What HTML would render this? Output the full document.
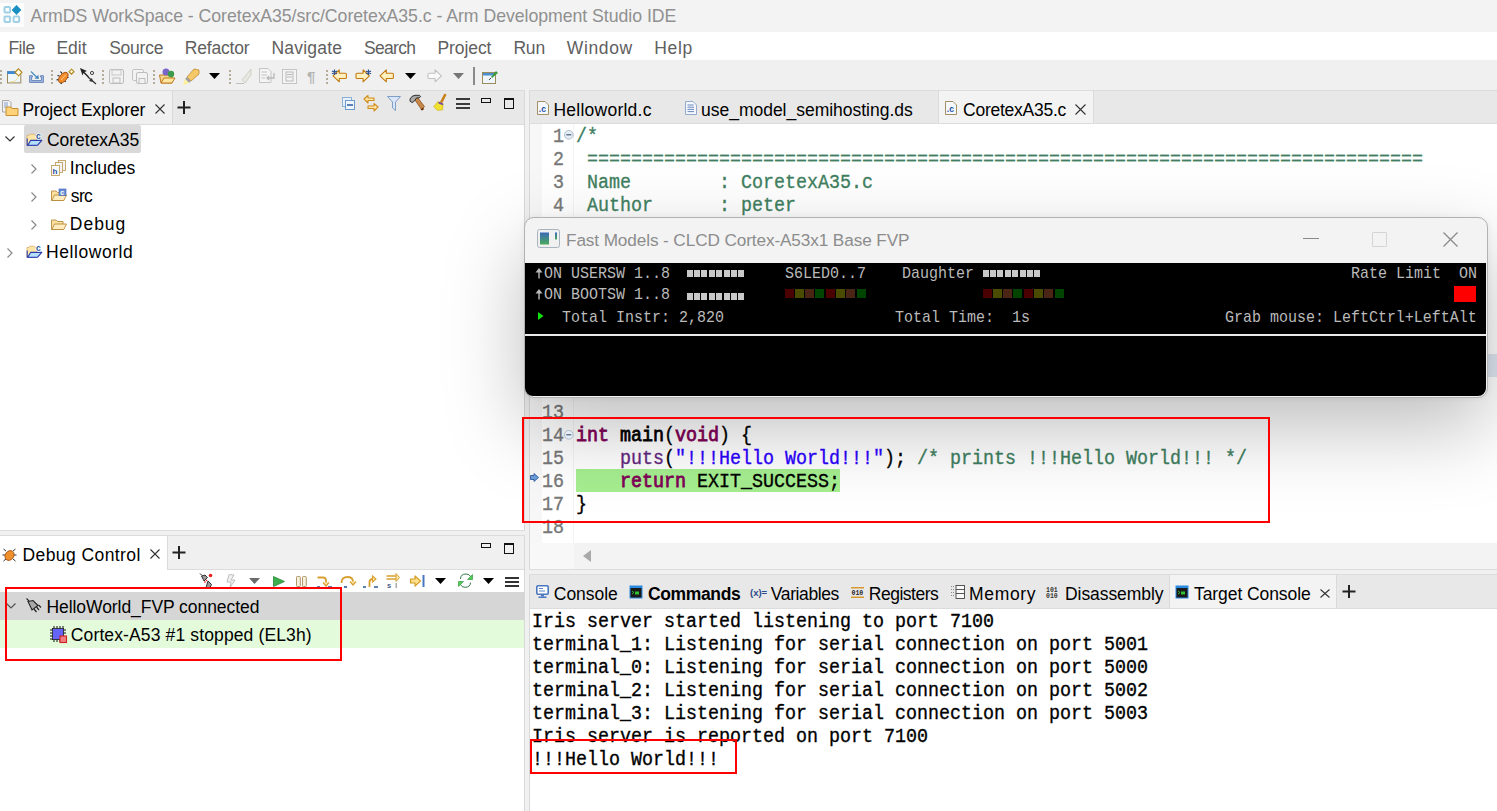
<!DOCTYPE html>
<html><head><meta charset="utf-8">
<style>
*{margin:0;padding:0;box-sizing:border-box}
html,body{width:1497px;height:811px;overflow:hidden;background:#f0f0f0;font-family:"Liberation Sans",sans-serif;font-size:17.5px;color:#000;position:relative}
.a{position:absolute;white-space:pre}
.m{font-family:"Liberation Mono",monospace;-webkit-text-stroke:0.35px currentColor}
.m b{font-weight:normal;-webkit-text-stroke:0.8px currentColor}
svg{position:absolute;overflow:visible}
</style></head><body>
<div class="a" style="left:0px;top:0px;width:1497px;height:32px;background:#f3f3f3;"></div>
<div class="a" style="left:0px;top:3px;width:24px;height:24px;background:#fdfdfd;"></div>
<svg style="left:0px;top:3px" width="24" height="24" viewBox="0 0 24 24"><g fill="none" stroke="#9fd0e6" stroke-width="2"><rect x="4.5" y="4" width="5.6" height="5.6" rx="1"/><rect x="4.5" y="13.5" width="5.6" height="5.6" rx="1"/><rect x="13.6" y="13.5" width="5.6" height="5.6" rx="1"/></g><path d="M16.5 2.3 L21 7 L16.5 11.6 L12 7Z" fill="#1a8fc2" stroke="#2a98c8" stroke-width="0.8" stroke-linejoin="round"/></svg>
<div class="a" style="left:30.5px;top:6.07px;font-size:17.7px;line-height:20px;color:#909090;letter-spacing:-0.036px;">ArmDS WorkSpace - CoretexA35/src/CoretexA35.c - Arm Development Studio IDE</div>
<div class="a" style="left:0px;top:32px;width:1497px;height:28px;background:#ffffff;"></div>
<div class="a" style="left:8.4px;top:37.94px;font-size:17.5px;line-height:20px;color:#606060;letter-spacing:-0.489px;">File</div>
<div class="a" style="left:56.4px;top:37.94px;font-size:17.5px;line-height:20px;color:#606060;letter-spacing:0.036px;">Edit</div>
<div class="a" style="left:109.2px;top:37.94px;font-size:17.5px;line-height:20px;color:#606060;letter-spacing:-0.243px;">Source</div>
<div class="a" style="left:184.7px;top:37.94px;font-size:17.5px;line-height:20px;color:#606060;letter-spacing:-0.173px;">Refactor</div>
<div class="a" style="left:271.5px;top:37.94px;font-size:17.5px;line-height:20px;color:#606060;letter-spacing:0.209px;">Navigate</div>
<div class="a" style="left:364px;top:37.94px;font-size:17.5px;line-height:20px;color:#606060;letter-spacing:-0.703px;">Search</div>
<div class="a" style="left:437.5px;top:37.94px;font-size:17.5px;line-height:20px;color:#606060;letter-spacing:-0.084px;">Project</div>
<div class="a" style="left:513.4px;top:37.94px;font-size:17.5px;line-height:20px;color:#606060;letter-spacing:-0.185px;">Run</div>
<div class="a" style="left:566.8px;top:37.94px;font-size:17.5px;line-height:20px;color:#606060;letter-spacing:0.639px;">Window</div>
<div class="a" style="left:654.3px;top:37.94px;font-size:17.5px;line-height:20px;color:#606060;letter-spacing:0.614px;">Help</div>
<div class="a" style="left:0px;top:60px;width:1497px;height:30px;background:#f0f0f0;"></div>
<div class="a" style="left:0px;top:90px;width:525px;height:441px;background:#ffffff;border-top:1px solid #dcdcdc;border-right:1px solid #d9d9d9;border-bottom:1px solid #dcdcdc"></div>
<div class="a" style="left:0px;top:91px;width:524px;height:34px;background:#e8e8e8;border-bottom:1px solid #dcdcdc"></div>
<div class="a" style="left:0px;top:91px;width:173px;height:33px;background:#f0f0f0;border-right:1px solid #dadada"></div>
<div class="a" style="left:22.4px;top:99.94px;font-size:17.5px;line-height:20px;color:#000;letter-spacing:-0.098px;">Project Explorer</div>
<div class="a" style="left:24px;top:125px;width:117px;height:28px;background:#d9d9d9;border-radius:2px"></div>
<div class="a" style="left:47px;top:129.74px;font-size:17.5px;line-height:20px;color:#000;letter-spacing:-0.031px;">CoretexA35</div>
<div class="a" style="left:69.8px;top:157.74px;font-size:17.5px;line-height:20px;color:#000;letter-spacing:0.053px;">Includes</div>
<div class="a" style="left:70.8px;top:185.74px;font-size:17.5px;line-height:20px;color:#000;letter-spacing:-0.639px;">src</div>
<div class="a" style="left:69.8px;top:213.74px;font-size:17.5px;line-height:20px;color:#000;letter-spacing:0.991px;">Debug</div>
<div class="a" style="left:46.1px;top:241.74px;font-size:17.5px;line-height:20px;color:#000;letter-spacing:0.548px;">Helloworld</div>
<div class="a" style="left:529px;top:90px;width:968px;height:480px;background:#ffffff;border-top:1px solid #dcdcdc;border-left:1px solid #d9d9d9;border-bottom:1px solid #dcdcdc"></div>
<div class="a" style="left:530px;top:91px;width:967px;height:33px;background:#e8e8e8;border-bottom:1px solid #dcdcdc"></div>
<div class="a" style="left:938px;top:91px;width:156px;height:32px;background:#f3f3f3;border-left:1px solid #dadada;border-right:1px solid #dadada"></div>
<div class="a" style="left:553.4px;top:99.94px;font-size:17.5px;line-height:20px;color:#000;letter-spacing:0.249px;">Helloworld.c</div>
<div class="a" style="left:701px;top:99.94px;font-size:17.5px;line-height:20px;color:#000;letter-spacing:-0.014px;">use_model_semihosting.ds</div>
<div class="a" style="left:963px;top:99.94px;font-size:17.5px;line-height:20px;color:#000;letter-spacing:-0.243px;">CoretexA35.c</div>
<div class="a" style="left:530px;top:124px;width:12px;height:420px;background:#f7f7f7;"></div>
<div class="a" style="left:542px;top:124px;width:31px;height:420px;background:#ffffff;"></div>
<div class="a" style="left:573px;top:124px;width:1px;height:420px;background:#f4f4f4;"></div>
<div class="a" style="left:530px;top:543px;width:967px;height:26px;background:#f3f3f3;"></div>
<div class="a" style="left:530px;top:543px;width:44px;height:26px;background:#f8f8f8;"></div>
<div class="a" style="left:0px;top:535px;width:525px;height:276px;background:#ffffff;border-top:1px solid #dcdcdc;border-right:1px solid #d9d9d9"></div>
<div class="a" style="left:0px;top:536px;width:524px;height:34px;background:#f0f0f0;border-bottom:1px solid #dcdcdc"></div>
<div class="a" style="left:0px;top:536px;width:168px;height:34px;background:#ffffff;border-right:1px solid #dadada"></div>
<div class="a" style="left:22.5px;top:544.54px;font-size:17.5px;line-height:20px;color:#000;letter-spacing:0.42px;">Debug Control</div>
<div class="a" style="left:0px;top:592px;width:524px;height:28px;background:#d6d6d6;"></div>
<div class="a" style="left:0px;top:620px;width:524px;height:28px;background:#e3fadb;"></div>
<div class="a" style="left:46.4px;top:597.14px;font-size:17.5px;line-height:20px;color:#000;letter-spacing:-0.057px;">HelloWorld_FVP connected</div>
<div class="a" style="left:70.8px;top:624.94px;font-size:17.5px;line-height:20px;color:#000;letter-spacing:0.128px;">Cortex-A53 #1 stopped (EL3h)</div>
<div class="a" style="left:529px;top:574px;width:968px;height:237px;background:#ffffff;border-top:1px solid #dcdcdc;border-left:1px solid #d9d9d9"></div>
<div class="a" style="left:530px;top:575px;width:967px;height:34px;background:#e8e8e8;border-bottom:1px solid #dcdcdc"></div>
<div class="a" style="left:1169px;top:575px;width:168px;height:33px;background:#f3f3f3;border-left:1px solid #dadada;border-right:1px solid #dadada"></div>
<div class="a" style="left:553.8px;top:584.44px;font-size:17.5px;line-height:20px;color:#000;letter-spacing:-0.046px;">Console</div>
<div class="a" style="left:648px;top:584.44px;font-size:17.5px;line-height:20px;color:#000;letter-spacing:-0.366px;font-weight:bold">Commands</div>
<div class="a" style="left:770.8px;top:584.44px;font-size:17.5px;line-height:20px;color:#000;letter-spacing:-0.388px;">Variables</div>
<div class="a" style="left:868.8px;top:584.44px;font-size:17.5px;line-height:20px;color:#000;letter-spacing:-0.495px;">Registers</div>
<div class="a" style="left:969px;top:584.44px;font-size:17.5px;line-height:20px;color:#000;letter-spacing:0.67px;">Memory</div>
<div class="a" style="left:1065px;top:584.44px;font-size:17.5px;line-height:20px;color:#000;letter-spacing:-0.074px;">Disassembly</div>
<div class="a" style="left:1194px;top:584.44px;font-size:17.5px;line-height:20px;color:#000;letter-spacing:-0.075px;">Target Console</div>
<div class="a m" style="left:532px;top:609.84px;font-size:20.5px;line-height:23px;color:#000;transform:scaleX(0.8942);transform-origin:0 0;">Iris server started listening to port 7100</div>
<div class="a m" style="left:532px;top:632.84px;font-size:20.5px;line-height:23px;color:#000;transform:scaleX(0.8942);transform-origin:0 0;">terminal_1: Listening for serial connection on port 5001</div>
<div class="a m" style="left:532px;top:655.84px;font-size:20.5px;line-height:23px;color:#000;transform:scaleX(0.8942);transform-origin:0 0;">terminal_0: Listening for serial connection on port 5000</div>
<div class="a m" style="left:532px;top:678.84px;font-size:20.5px;line-height:23px;color:#000;transform:scaleX(0.8942);transform-origin:0 0;">terminal_2: Listening for serial connection on port 5002</div>
<div class="a m" style="left:532px;top:701.84px;font-size:20.5px;line-height:23px;color:#000;transform:scaleX(0.8942);transform-origin:0 0;">terminal_3: Listening for serial connection on port 5003</div>
<div class="a m" style="left:532px;top:724.84px;font-size:20.5px;line-height:23px;color:#000;transform:scaleX(0.8942);transform-origin:0 0;">Iris server is reported on port 7100</div>
<div class="a m" style="left:532px;top:747.84px;font-size:20.5px;line-height:23px;color:#000;transform:scaleX(0.8942);transform-origin:0 0;">!!!Hello World!!!</div>
<div class="a m" style="left:553px;top:125.04px;font-size:20.5px;line-height:23px;color:#787878;transform:scaleX(0.8942);transform-origin:0 0;">1</div>
<div class="a m" style="left:553px;top:148.04px;font-size:20.5px;line-height:23px;color:#787878;transform:scaleX(0.8942);transform-origin:0 0;">2</div>
<div class="a m" style="left:553px;top:171.04px;font-size:20.5px;line-height:23px;color:#787878;transform:scaleX(0.8942);transform-origin:0 0;">3</div>
<div class="a m" style="left:553px;top:194.04px;font-size:20.5px;line-height:23px;color:#787878;transform:scaleX(0.8942);transform-origin:0 0;">4</div>
<div class="a m" style="left:542px;top:401.04px;font-size:20.5px;line-height:23px;color:#787878;transform:scaleX(0.8942);transform-origin:0 0;">13</div>
<div class="a m" style="left:542px;top:424.04px;font-size:20.5px;line-height:23px;color:#787878;transform:scaleX(0.8942);transform-origin:0 0;">14</div>
<div class="a m" style="left:542px;top:447.04px;font-size:20.5px;line-height:23px;color:#787878;transform:scaleX(0.8942);transform-origin:0 0;">15</div>
<div class="a m" style="left:542px;top:470.04px;font-size:20.5px;line-height:23px;color:#787878;transform:scaleX(0.8942);transform-origin:0 0;">16</div>
<div class="a m" style="left:542px;top:493.04px;font-size:20.5px;line-height:23px;color:#787878;transform:scaleX(0.8942);transform-origin:0 0;">17</div>
<div class="a m" style="left:542px;top:516.04px;font-size:20.5px;line-height:23px;color:#787878;transform:scaleX(0.8942);transform-origin:0 0;">18</div>
<div class="a m" style="left:576px;top:125.04px;font-size:20.5px;line-height:23px;color:#3f7f5f;transform:scaleX(0.8942);transform-origin:0 0;">/*</div>
<div class="a m" style="left:576px;top:148.04px;font-size:20.5px;line-height:23px;color:#3f7f5f;transform:scaleX(0.8942);transform-origin:0 0;"> ============================================================================</div>
<div class="a m" style="left:576px;top:171.04px;font-size:20.5px;line-height:23px;color:#3f7f5f;transform:scaleX(0.8942);transform-origin:0 0;"> Name        : CoretexA35.c</div>
<div class="a m" style="left:576px;top:194.04px;font-size:20.5px;line-height:23px;color:#3f7f5f;transform:scaleX(0.8942);transform-origin:0 0;"> Author      : peter</div>
<div class="a" style="left:576px;top:469px;width:264px;height:23px;background:#a6ee90;"></div>
<div class="a m" style="left:576px;top:424.04px;font-size:20.5px;line-height:23px;color:#000;transform:scaleX(0.8942);transform-origin:0 0;"><b style="color:#7f0055">int</b> <b>main</b>(<b style="color:#7f0055">void</b>) {</div>
<div class="a m" style="left:576px;top:447.04px;font-size:20.5px;line-height:23px;color:#000;transform:scaleX(0.8942);transform-origin:0 0;">    <span style="color:#642880">puts</span>(<span style="color:#2a00ff">"!!!Hello World!!!"</span>); <span style="color:#3f7f5f">/* prints !!!Hello World!!! */</span></div>
<div class="a m" style="left:576px;top:470.04px;font-size:20.5px;line-height:23px;color:#000;transform:scaleX(0.8942);transform-origin:0 0;">    <b style="color:#7f0055">return</b> EXIT_SUCCESS;</div>
<div class="a m" style="left:576px;top:493.04px;font-size:20.5px;line-height:23px;color:#000;transform:scaleX(0.8942);transform-origin:0 0;">}</div>
<div class="a" style="left:1300px;top:354px;width:197px;height:23px;background:#dfe7f2;"></div>
<div class="a" style="left:523.5px;top:216.5px;width:964px;height:181px;background:#f3f3f3;border:1.6px solid #b2b2b2;border-radius:10px;box-shadow:0 30px 80px rgba(0,0,0,0.26),0 0 6px rgba(0,0,0,0.06);overflow:hidden"></div>
<div class="a" style="left:525px;top:263px;width:961px;height:133px;background:#000000;border-radius:0 0 8px 8px"></div>
<div class="a" style="left:525px;top:334px;width:961px;height:2px;background:#e8e8e8;"></div>
<div class="a" style="left:566px;top:230.04px;font-size:17.2px;line-height:20px;color:#8c8c8c;letter-spacing:-0.108px;">Fast Models - CLCD Cortex-A53x1 Base FVP</div>
<svg style="left:537px;top:229px" width="23" height="20" viewBox="0 0 23 20"><rect x="0.5" y="0.5" width="22" height="18" rx="2" fill="#f0f0f0" stroke="#a8b4c0"/><defs><linearGradient id="fg" x1="0" y1="0" x2="0" y2="1"><stop offset="0" stop-color="#3a6ab8"/><stop offset="1" stop-color="#4aaa5a"/></linearGradient></defs><rect x="3" y="3.5" width="9" height="12" fill="url(#fg)"/><rect x="18" y="3.5" width="2" height="7" fill="url(#fg)"/></svg>
<div class="a" style="left:1303px;top:238px;width:16px;height:1.2px;background:#8a8a8a;"></div>
<div class="a" style="left:1372px;top:232px;width:15px;height:15px;background:transparent;border:1.2px solid #d4d4d4;border-radius:1px"></div>
<svg style="left:1443px;top:232px" width="15" height="15" viewBox="0 0 15 15"><path d="M0.5 0.5 L14.5 14.5 M14.5 0.5 L0.5 14.5" stroke="#8a8a8a" stroke-width="1.3"/></svg>
<div class="a m" style="left:544px;top:265.19px;font-size:16.2px;line-height:18px;color:#bababa;transform:scaleX(0.9258);transform-origin:0 0;-webkit-text-stroke:0">ON USERSW 1..8</div>
<div class="a m" style="left:785px;top:265.19px;font-size:16.2px;line-height:18px;color:#bababa;transform:scaleX(0.9258);transform-origin:0 0;-webkit-text-stroke:0">S6LED0..7</div>
<div class="a m" style="left:902px;top:265.19px;font-size:16.2px;line-height:18px;color:#bababa;transform:scaleX(0.9258);transform-origin:0 0;-webkit-text-stroke:0">Daughter</div>
<div class="a m" style="left:544px;top:285.89px;font-size:16.2px;line-height:18px;color:#bababa;transform:scaleX(0.9258);transform-origin:0 0;-webkit-text-stroke:0">ON BOOTSW 1..8</div>
<svg style="left:535px;top:268px" width="9" height="11" viewBox="0 0 9 11"><path d="M4 0 L7.5 4.5 H0.5Z" fill="#bababa"/><rect x="3.3" y="4" width="1.4" height="6.5" fill="#bababa"/></svg>
<svg style="left:535px;top:289px" width="9" height="11" viewBox="0 0 9 11"><path d="M4 0 L7.5 4.5 H0.5Z" fill="#bababa"/><rect x="3.3" y="4" width="1.4" height="6.5" fill="#bababa"/></svg>
<div class="a m" style="left:562px;top:308.89px;font-size:16.2px;line-height:18px;color:#bababa;transform:scaleX(0.9258);transform-origin:0 0;-webkit-text-stroke:0">Total Instr: 2,820</div>
<div class="a m" style="left:895px;top:308.89px;font-size:16.2px;line-height:18px;color:#bababa;transform:scaleX(0.9258);transform-origin:0 0;-webkit-text-stroke:0">Total Time:  1s</div>
<div class="a m" style="left:1351px;top:265.19px;font-size:16.2px;line-height:18px;color:#bababa;transform:scaleX(0.9258);transform-origin:0 0;-webkit-text-stroke:0">Rate Limit  ON</div>
<div class="a m" style="left:1225px;top:308.89px;font-size:16.2px;line-height:18px;color:#bababa;transform:scaleX(0.9258);transform-origin:0 0;-webkit-text-stroke:0">Grab mouse: LeftCtrl+LeftAlt</div>
<div class="a" style="left:1454px;top:286px;width:22px;height:16px;background:#ff0000;"></div>
<svg style="left:538px;top:312px" width="6" height="8" viewBox="0 0 6 8"><path d="M0 0 L5.5 4 L0 8Z" fill="#10e010"/></svg>
<div class="a" style="left:686.5px;top:270px;width:6px;height:6.5px;background:#c8c8c8;"></div>
<div class="a" style="left:693.9px;top:270px;width:6px;height:6.5px;background:#c8c8c8;"></div>
<div class="a" style="left:701.3px;top:270px;width:6px;height:6.5px;background:#c8c8c8;"></div>
<div class="a" style="left:708.7px;top:270px;width:6px;height:6.5px;background:#c8c8c8;"></div>
<div class="a" style="left:716.1px;top:270px;width:6px;height:6.5px;background:#c8c8c8;"></div>
<div class="a" style="left:723.5px;top:270px;width:6px;height:6.5px;background:#c8c8c8;"></div>
<div class="a" style="left:730.9px;top:270px;width:6px;height:6.5px;background:#c8c8c8;"></div>
<div class="a" style="left:738.3px;top:270px;width:6px;height:6.5px;background:#c8c8c8;"></div>
<div class="a" style="left:982.5px;top:270px;width:6px;height:6.5px;background:#c8c8c8;"></div>
<div class="a" style="left:989.9px;top:270px;width:6px;height:6.5px;background:#c8c8c8;"></div>
<div class="a" style="left:997.3px;top:270px;width:6px;height:6.5px;background:#c8c8c8;"></div>
<div class="a" style="left:1004.7px;top:270px;width:6px;height:6.5px;background:#c8c8c8;"></div>
<div class="a" style="left:1012.1px;top:270px;width:6px;height:6.5px;background:#c8c8c8;"></div>
<div class="a" style="left:1019.5px;top:270px;width:6px;height:6.5px;background:#c8c8c8;"></div>
<div class="a" style="left:1026.9px;top:270px;width:6px;height:6.5px;background:#c8c8c8;"></div>
<div class="a" style="left:1034.3px;top:270px;width:6px;height:6.5px;background:#c8c8c8;"></div>
<div class="a" style="left:686.5px;top:293px;width:6px;height:6.5px;background:#c8c8c8;"></div>
<div class="a" style="left:693.9px;top:293px;width:6px;height:6.5px;background:#c8c8c8;"></div>
<div class="a" style="left:701.3px;top:293px;width:6px;height:6.5px;background:#c8c8c8;"></div>
<div class="a" style="left:708.7px;top:293px;width:6px;height:6.5px;background:#c8c8c8;"></div>
<div class="a" style="left:716.1px;top:293px;width:6px;height:6.5px;background:#c8c8c8;"></div>
<div class="a" style="left:723.5px;top:293px;width:6px;height:6.5px;background:#c8c8c8;"></div>
<div class="a" style="left:730.9px;top:293px;width:6px;height:6.5px;background:#c8c8c8;"></div>
<div class="a" style="left:738.3px;top:293px;width:6px;height:6.5px;background:#c8c8c8;"></div>
<div class="a" style="left:784.5px;top:288.5px;width:9px;height:9px;background:#4a0000;"></div>
<div class="a" style="left:794.8px;top:288.5px;width:9px;height:9px;background:#4a4a00;"></div>
<div class="a" style="left:805.1px;top:288.5px;width:9px;height:9px;background:#4a2414;"></div>
<div class="a" style="left:815.4px;top:288.5px;width:9px;height:9px;background:#004400;"></div>
<div class="a" style="left:825.7px;top:288.5px;width:9px;height:9px;background:#4a0000;"></div>
<div class="a" style="left:836.0px;top:288.5px;width:9px;height:9px;background:#4a4a00;"></div>
<div class="a" style="left:846.3px;top:288.5px;width:9px;height:9px;background:#4a2414;"></div>
<div class="a" style="left:856.6px;top:288.5px;width:9px;height:9px;background:#004400;"></div>
<div class="a" style="left:982.5px;top:288.5px;width:9px;height:9px;background:#4a0000;"></div>
<div class="a" style="left:992.8px;top:288.5px;width:9px;height:9px;background:#4a4a00;"></div>
<div class="a" style="left:1003.1px;top:288.5px;width:9px;height:9px;background:#4a2414;"></div>
<div class="a" style="left:1013.4px;top:288.5px;width:9px;height:9px;background:#004400;"></div>
<div class="a" style="left:1023.7px;top:288.5px;width:9px;height:9px;background:#4a0000;"></div>
<div class="a" style="left:1034.0px;top:288.5px;width:9px;height:9px;background:#4a4a00;"></div>
<div class="a" style="left:1044.3px;top:288.5px;width:9px;height:9px;background:#4a2414;"></div>
<div class="a" style="left:1054.6px;top:288.5px;width:9px;height:9px;background:#004400;"></div>
<div class="a" style="left:0px;top:70px;width:1.6px;height:1.6px;background:#b4ab98;"></div>
<div class="a" style="left:0px;top:74px;width:1.6px;height:1.6px;background:#b4ab98;"></div>
<div class="a" style="left:0px;top:78px;width:1.6px;height:1.6px;background:#b4ab98;"></div>
<div class="a" style="left:0px;top:82px;width:1.6px;height:1.6px;background:#b4ab98;"></div>
<svg style="left:7px;top:68px" width="16" height="16" viewBox="0 0 16 16"><rect x="0.5" y="3.7" width="13.3" height="11.2" fill="#eef7fd" stroke="#9a8858" stroke-width="1"/><rect x="0.2" y="3.2" width="11" height="2.8" fill="#3a8ad6"/><path d="M3 14 Q10 14 11.5 8" fill="none" stroke="#f4dc90" stroke-width="1"/><path d="M11.5 0.8 L15 4.3 L11.5 7.8 L8 4.3Z" fill="#fff4d0" stroke="#b08a20" stroke-width="1.1"/><path d="M11.5 2.5 V6 M9.8 4.3 H13.2" stroke="#fff" stroke-width="0.8"/></svg>
<svg style="left:29px;top:70px" width="16" height="14" viewBox="0 0 16 14"><path d="M0.6 5.7 H3.4 V7 H2.6 V10.6 H12.4 V7 H11.6 V5.7 H14.4 V12.4 H0.6Z" fill="#a8bde0" stroke="#6a86bc" stroke-width="1"/><path d="M2 1.5 L8 7.5" stroke="#3f8ac4" stroke-width="1.1"/><path d="M9.8 9 L5.5 8.6 L9.4 4.7Z" fill="#3f88c0"/></svg>
<div class="a" style="left:51px;top:70px;width:1.6px;height:1.6px;background:#b4ab98;"></div>
<div class="a" style="left:51px;top:74px;width:1.6px;height:1.6px;background:#b4ab98;"></div>
<div class="a" style="left:51px;top:78px;width:1.6px;height:1.6px;background:#b4ab98;"></div>
<div class="a" style="left:51px;top:82px;width:1.6px;height:1.6px;background:#b4ab98;"></div>
<svg style="left:56px;top:68px" width="18" height="17" viewBox="0 0 18 17"><g stroke="#1a1a1a" stroke-width="1.2" fill="none"><path d="M6 5.5 L4.5 3.5 M3.5 8 L1.5 7.5 M2.5 11.5 L0.5 12 M10.5 9.5 L12.5 9.5 M8.5 12.5 L9.5 14 M5.5 14 L5 16"/></g><ellipse cx="7.3" cy="9.6" rx="3.6" ry="6.2" transform="rotate(40 7.3 9.6)" fill="#f28c28" stroke="#9a4a10" stroke-width="0.8"/><path d="M5 12 L10 6.5" stroke="#ffd8a0" stroke-width="0.8"/><path d="M15.5 1.2 L18 3.7 L15.5 6.2 L13 3.7Z" fill="#fff4d0" stroke="#b08a20" stroke-width="1.1"/></svg>
<svg style="left:80px;top:68px" width="17" height="17" viewBox="0 0 17 17"><path d="M0 0 L7 3 L4.5 4 L9 8.5 L8 9.5 L3.5 5 L2.5 7.5Z" fill="#222"/><circle cx="12" cy="5" r="1.6" fill="none" stroke="#444"/><path d="M8 9 L16 16" stroke="#333" stroke-width="1.2"/><path d="M9 13 L12 10 L13 14Z" fill="#333"/></svg>
<div class="a" style="left:102px;top:70px;width:1.6px;height:1.6px;background:#b4ab98;"></div>
<div class="a" style="left:102px;top:74px;width:1.6px;height:1.6px;background:#b4ab98;"></div>
<div class="a" style="left:102px;top:78px;width:1.6px;height:1.6px;background:#b4ab98;"></div>
<div class="a" style="left:102px;top:82px;width:1.6px;height:1.6px;background:#b4ab98;"></div>
<svg style="left:109px;top:69px" width="15" height="15" viewBox="0 0 15 15"><rect x="0.5" y="0.5" width="14" height="14" rx="1.5" fill="#f2f2f2" stroke="#bdbdbd"/><rect x="3" y="1" width="9" height="5" fill="none" stroke="#c8c8c8"/><rect x="4" y="9" width="7" height="5" fill="none" stroke="#bdbdbd"/></svg>
<svg style="left:132px;top:69px" width="16" height="15" viewBox="0 0 16 15"><rect x="0.5" y="0.5" width="11" height="11" rx="1.5" fill="#f2f2f2" stroke="#c4c4c4"/><rect x="4.5" y="3.5" width="11" height="11" rx="1.5" fill="#f2f2f2" stroke="#bdbdbd"/><rect x="7" y="9.5" width="6" height="5" fill="none" stroke="#bdbdbd"/></svg>
<div class="a" style="left:153px;top:70px;width:1.6px;height:1.6px;background:#b4ab98;"></div>
<div class="a" style="left:153px;top:74px;width:1.6px;height:1.6px;background:#b4ab98;"></div>
<div class="a" style="left:153px;top:78px;width:1.6px;height:1.6px;background:#b4ab98;"></div>
<div class="a" style="left:153px;top:82px;width:1.6px;height:1.6px;background:#b4ab98;"></div>
<svg style="left:159px;top:68px" width="17" height="16" viewBox="0 0 17 16"><path d="M0.5 7 H13 V15 H2 Z" fill="#f5d58a" stroke="#c07a20"/><path d="M2 15 L5 10 H16 L13 15Z" fill="#ffe6a0" stroke="#c07a20"/><circle cx="7" cy="4" r="3.5" fill="#7a66c8"/><circle cx="12" cy="6" r="3.2" fill="#3c9a4c"/></svg>
<svg style="left:183px;top:69px" width="17" height="16" viewBox="0 0 17 16"><path d="M16 1 L11 0 L4 8 L8 12 L16 5Z" fill="#f5c868" stroke="#c08830" stroke-width="0.8"/><path d="M4 8 L8 12 L6 14 L2 10Z" fill="#a0a0a0"/><path d="M2 10 L6 14 L1 16 L0 15Z" fill="#fff0a0"/></svg>
<svg style="left:209px;top:73px" width="11" height="6" viewBox="0 0 11 6"><path d="M0 0 H11 L5.5 6Z" fill="#000"/></svg>
<div class="a" style="left:229px;top:70px;width:1.6px;height:1.6px;background:#b4ab98;"></div>
<div class="a" style="left:229px;top:74px;width:1.6px;height:1.6px;background:#b4ab98;"></div>
<div class="a" style="left:229px;top:78px;width:1.6px;height:1.6px;background:#b4ab98;"></div>
<div class="a" style="left:229px;top:82px;width:1.6px;height:1.6px;background:#b4ab98;"></div>
<svg style="left:235px;top:69px" width="16" height="15" viewBox="0 0 16 15"><path d="M16 0 L7 11 L10 14 L16 6Z" fill="#e8e8e0" stroke="#c8c8c0" stroke-width="0.8"/><path d="M1 14.5 H9" stroke="#c0c0c0"/></svg>
<svg style="left:259px;top:68px" width="16" height="15" viewBox="0 0 16 15"><path d="M0.5 0.5 H9 L12 3.5 V14.5 H0.5Z" fill="#f4f4f4" stroke="#c4c4c4"/><path d="M2.5 4 H8 M2.5 7 H8 M2.5 10 H6" stroke="#c4c4c4"/><path d="M15 5 V10 H8 M10 8 L8 10 L10 12" fill="none" stroke="#b8b8b8" stroke-width="1.3"/></svg>
<svg style="left:282px;top:69px" width="15" height="15" viewBox="0 0 15 15"><rect x="0.5" y="0.5" width="14" height="14" fill="#f4f4f4" stroke="#c4c4c4"/><rect x="4" y="3" width="7" height="9" fill="none" stroke="#b8b8b8"/><path d="M5 5.5 H10 M5 8 H10" stroke="#b8b8b8"/></svg>
<div class="a" style="left:307px;top:67.3px;font-size:15px;line-height:20px;color:#b4b4b4;font-weight:bold">¶</div>
<div class="a" style="left:326px;top:70px;width:1.6px;height:1.6px;background:#b4ab98;"></div>
<div class="a" style="left:326px;top:74px;width:1.6px;height:1.6px;background:#b4ab98;"></div>
<div class="a" style="left:326px;top:78px;width:1.6px;height:1.6px;background:#b4ab98;"></div>
<div class="a" style="left:326px;top:82px;width:1.6px;height:1.6px;background:#b4ab98;"></div>
<svg style="left:332px;top:69px" width="16" height="14" viewBox="0 0 16 14"><path d="M1 6.8 L7.3 0.8 V4.2 H13.3 Q14.4 4.2 14.4 5.3 V8.4 Q14.4 9.5 13.3 9.5 H7.3 V12.8Z" fill="#fff0c0" stroke="#c07a10" stroke-width="1.1" stroke-linejoin="round"/><g transform="translate(0 0.5)"><g stroke="#2a5090" stroke-width="1.2"><path d="M2.5 0 V5.6 M0 1.4 L5 4.2 M0 4.2 L5 1.4"/></g></g></svg>
<svg style="left:355px;top:69px" width="16" height="14" viewBox="0 0 16 14"><g transform="translate(15.4 0) scale(-1 1)"><path d="M1 6.8 L7.3 0.8 V4.2 H13.3 Q14.4 4.2 14.4 5.3 V8.4 Q14.4 9.5 13.3 9.5 H7.3 V12.8Z" fill="#fff0c0" stroke="#c07a10" stroke-width="1.1" stroke-linejoin="round"/></g><g transform="translate(11 0.5)"><g stroke="#2a5090" stroke-width="1.2"><path d="M2.5 0 V5.6 M0 1.4 L5 4.2 M0 4.2 L5 1.4"/></g></g></svg>
<svg style="left:379px;top:69px" width="16" height="14" viewBox="0 0 16 14"><path d="M1 6.8 L7.3 0.8 V4.2 H13.3 Q14.4 4.2 14.4 5.3 V8.4 Q14.4 9.5 13.3 9.5 H7.3 V12.8Z" fill="#fff0c0" stroke="#c07a10" stroke-width="1.1" stroke-linejoin="round"/></svg>
<svg style="left:405px;top:73px" width="11" height="6" viewBox="0 0 11 6"><path d="M0 0 H11 L5.5 6Z" fill="#000"/></svg>
<svg style="left:427px;top:69px" width="16" height="14" viewBox="0 0 16 14"><g transform="translate(15.4 0) scale(-1 1)"><path d="M1 6.8 L7.3 0.8 V4.2 H13.3 Q14.4 4.2 14.4 5.3 V8.4 Q14.4 9.5 13.3 9.5 H7.3 V12.8Z" fill="#fafafa" stroke="#c0c0c0" stroke-width="1.1" stroke-linejoin="round"/></g></svg>
<svg style="left:453px;top:73px" width="11" height="6" viewBox="0 0 11 6"><path d="M0 0 H11 L5.5 6Z" fill="#777"/></svg>
<div class="a" style="left:473px;top:67px;width:1.5px;height:18px;background:#8a8a8a;"></div>
<svg style="left:482px;top:69px" width="15" height="15" viewBox="0 0 15 15"><rect x="0.5" y="3.5" width="13" height="11" fill="#eef6fc" stroke="#9c8c5c"/><rect x="1" y="4" width="12" height="2.5" fill="#4a90d0"/><path d="M9 8 L14 2 L16 4 L10 9Z" fill="#3c9a3c"/><path d="M9 9 L7 11" stroke="#444"/></svg>
<svg style="left:2px;top:100px" width="17" height="16" viewBox="0 0 17 16"><path d="M0.5 0.5 H7 L9 2.5 V12 H0.5Z" fill="#f2f2f2" stroke="#a8a8a8"/><path d="M2 3 H6 M2 5 H6 M2 7 H6" stroke="#6a8ac8" stroke-width="0.8"/><path d="M4 7 H9 L10 8.5 H16 V15.5 H4Z" fill="#ffd27a" stroke="#c89030"/></svg>
<svg style="left:155px;top:104px" width="10" height="10" viewBox="0 0 10 10"><path d="M0.5 0.5 L9.5 9.5 M9.5 0.5 L0.5 9.5" stroke="#333" stroke-width="1.1"/></svg>
<svg style="left:177px;top:101px" width="14" height="14" viewBox="0 0 14 14"><path d="M7 0 V13 M0.5 6.5 H13.5" stroke="#222" stroke-width="2"/></svg>
<svg style="left:342px;top:97px" width="13" height="13" viewBox="0 0 13 13"><rect x="0.5" y="0.5" width="9" height="9" fill="#e8f0fa" stroke="#8ab0d8"/><rect x="3.5" y="3.5" width="9" height="9" fill="#f0f6fc" stroke="#6a9ad0"/><path d="M5 8 H11" stroke="#2a5aa0" stroke-width="1.5"/></svg>
<svg style="left:363px;top:95px" width="16" height="16" viewBox="0 0 16 16"><path d="M1 4 L5 0.5 V3 H11 V5.5 H5 V8Z M15 12 L11 8.5 V11 H5 V13.5 H11 V16Z" fill="#ffe7a8" stroke="#d08c1c" stroke-width="1.1" stroke-linejoin="round"/></svg>
<svg style="left:387px;top:96px" width="14" height="15" viewBox="0 0 14 15"><path d="M0.5 0.5 H13.5 L8.5 6 V14.5 L5.5 12 V6Z" fill="#dbe7f6" stroke="#7f9fc8"/></svg>
<svg style="left:409px;top:94px" width="17" height="17" viewBox="0 0 17 17"><path d="M5.3 5 L8.6 3.6 L15.5 12.6 L12.6 15.6Z" fill="#c88848" stroke="#7a4010" stroke-width="0.7"/><path d="M11.5 15.5 L14 13.5 L15 15.2 L13 16.5Z" fill="#6a3008"/><path d="M1 5 Q2.5 1.6 6 1.3 H10.5 L11.7 2.6 L10.2 3.9 H7.6 L5.3 7.2 L3.2 8.6 L1 7.2Z" fill="#a8a8a8" stroke="#222" stroke-width="0.9" stroke-linejoin="round"/></svg>
<svg style="left:433px;top:94px" width="14" height="17" viewBox="0 0 14 17"><path d="M12 1 L8.5 7.8" stroke="#c8801a" stroke-width="2.6" stroke-linecap="round"/><path d="M4.8 7.5 L10.2 9.8 L9.6 16 L4.2 16.3 L0.6 12.8Z" fill="#f0e030" stroke="#c8b020" stroke-width="0.6"/><path d="M5.5 8.4 L10 10.4" stroke="#7040b0" stroke-width="1.6"/></svg>
<div class="a" style="left:456px;top:98.3px;width:14px;height:2px;background:#3a3a3a;"></div>
<div class="a" style="left:456px;top:102.6px;width:14px;height:2px;background:#3a3a3a;"></div>
<div class="a" style="left:456px;top:106.89999999999999px;width:14px;height:2px;background:#3a3a3a;"></div>
<div class="a" style="left:481px;top:98px;width:10px;height:4.5px;background:transparent;border:1.5px solid #111"></div>
<div class="a" style="left:504px;top:98px;width:10px;height:11px;background:transparent;border:1.5px solid #111;border-top-width:2px"></div>
<svg style="left:5px;top:136px" width="10" height="6" viewBox="0 0 10 6"><path d="M0.5 0.5 L5 5 L9.5 0.5" fill="none" stroke="#333" stroke-width="1.2"/></svg>
<svg style="left:26px;top:132px" width="17" height="14" viewBox="0 0 17 14"><path d="M1 3.5 H3 L3.8 2.2 H8.2 L9 3.5 H10.5 V13 H1Z" fill="#fde6a6" stroke="#dcb676" stroke-width="0.9"/><path d="M1.2 6.5 V13.3 H10" fill="none" stroke="#3040b0" stroke-width="1.1"/><path d="M4.6 8.4 H15.8 L11.4 13.3 H1.8Z" fill="#b4e0fc" stroke="#2a3aa8" stroke-width="1.1" stroke-linejoin="round"/><text x="10" y="7.2" font-size="8.5" font-weight="bold" fill="#1a5a9a" stroke="#fff" stroke-width="1.2" paint-order="stroke" font-family="Liberation Sans">c</text></svg>
<svg style="left:31px;top:164px" width="6" height="10" viewBox="0 0 6 10"><path d="M0.5 0.5 L5 5 L0.5 9.5" fill="none" stroke="#8a8a8a" stroke-width="1.2"/></svg>
<svg style="left:31px;top:192px" width="6" height="10" viewBox="0 0 6 10"><path d="M0.5 0.5 L5 5 L0.5 9.5" fill="none" stroke="#8a8a8a" stroke-width="1.2"/></svg>
<svg style="left:31px;top:220px" width="6" height="10" viewBox="0 0 6 10"><path d="M0.5 0.5 L5 5 L0.5 9.5" fill="none" stroke="#8a8a8a" stroke-width="1.2"/></svg>
<svg style="left:7px;top:248px" width="6" height="10" viewBox="0 0 6 10"><path d="M0.5 0.5 L5 5 L0.5 9.5" fill="none" stroke="#8a8a8a" stroke-width="1.2"/></svg>
<svg style="left:51px;top:160px" width="16" height="16" viewBox="0 0 16 16"><rect x="7.5" y="0.5" width="7" height="10" fill="#f4f4f4" stroke="#c0a060" stroke-width="0.9"/><rect x="4.5" y="2.5" width="7" height="10" fill="#f4f4f4" stroke="#c0a060" stroke-width="0.9"/><rect x="0.5" y="5.5" width="8" height="10" fill="#f8f8f8" stroke="#c0a060" stroke-width="0.9"/><text x="1.5" y="14" font-size="8" font-weight="bold" fill="#1f4fa8" font-family="Liberation Sans">h</text></svg>
<svg style="left:51px;top:189px" width="16" height="12" viewBox="0 0 16 12"><path d="M0.5 2 H5 L6.5 3.5 H12 V11.5 H0.5Z" fill="#fbe0a0" stroke="#b88a3a" stroke-width="0.9"/><path d="M0.8 11.5 L3.5 6 H15.5 L12.8 11.5Z" fill="#ffedc0" stroke="#b88a3a" stroke-width="0.9"/><rect x="8" y="0" width="7" height="6.5" fill="#6a8fd8" stroke="#3a5fb0" stroke-width="0.6"/><text x="9.3" y="5.6" font-size="7" font-weight="bold" fill="#fff" font-family="Liberation Sans">c</text></svg>
<svg style="left:51px;top:218px" width="16" height="12" viewBox="0 0 16 12"><path d="M0.5 2 H5 L6.5 3.5 H12 V11.5 H0.5Z" fill="#fbe0a0" stroke="#b88a3a" stroke-width="0.9"/><path d="M0.8 11.5 L3.5 6 H15.5 L12.8 11.5Z" fill="#ffedc0" stroke="#b88a3a" stroke-width="0.9"/></svg>
<svg style="left:26px;top:244px" width="17" height="14" viewBox="0 0 17 14"><path d="M1 3.5 H3 L3.8 2.2 H8.2 L9 3.5 H10.5 V13 H1Z" fill="#fde6a6" stroke="#dcb676" stroke-width="0.9"/><path d="M1.2 6.5 V13.3 H10" fill="none" stroke="#3040b0" stroke-width="1.1"/><path d="M4.6 8.4 H15.8 L11.4 13.3 H1.8Z" fill="#b4e0fc" stroke="#2a3aa8" stroke-width="1.1" stroke-linejoin="round"/><text x="10" y="7.2" font-size="8.5" font-weight="bold" fill="#1a5a9a" stroke="#fff" stroke-width="1.2" paint-order="stroke" font-family="Liberation Sans">c</text></svg>
<svg style="left:564px;top:130px" width="10" height="10" viewBox="0 0 10 10"><circle cx="4.8" cy="4.8" r="4.3" fill="#e6eef6" stroke="#a4b4c4" stroke-width="0.9"/><path d="M2.3 4.8 H7.3" stroke="#3a4a6a" stroke-width="1.1"/></svg>
<svg style="left:564px;top:430px" width="10" height="10" viewBox="0 0 10 10"><circle cx="4.8" cy="4.8" r="4.3" fill="#e6eef6" stroke="#a4b4c4" stroke-width="0.9"/><path d="M2.3 4.8 H7.3" stroke="#3a4a6a" stroke-width="1.1"/></svg>
<svg style="left:530px;top:473px" width="9" height="9" viewBox="0 0 9 9"><path d="M0.5 2.5 H4 V0.5 L8.5 4.5 L4 8.5 V6.5 H0.5Z" fill="#6a9ad8" stroke="#2a5a9a" stroke-width="0.9"/></svg>
<svg style="left:583px;top:550px" width="9" height="12" viewBox="0 0 9 12"><path d="M8 0 V12 L0 6Z" fill="#a8a8a8"/></svg>
<svg style="left:537px;top:101px" width="12" height="14" viewBox="0 0 12 14"><path d="M0.5 0.5 H8 L11.5 4 V13.5 H0.5Z" fill="#f4f8fc" stroke="#9a8450" stroke-width="0.9"/><text x="1.8" y="11" font-size="8.5" font-weight="bold" fill="#1f4fa8" font-family="Liberation Sans">.c</text></svg>
<svg style="left:945px;top:101px" width="12" height="14" viewBox="0 0 12 14"><path d="M0.5 0.5 H8 L11.5 4 V13.5 H0.5Z" fill="#f4f8fc" stroke="#9a8450" stroke-width="0.9"/><text x="1.8" y="11" font-size="8.5" font-weight="bold" fill="#1f4fa8" font-family="Liberation Sans">.c</text></svg>
<svg style="left:685px;top:101px" width="12" height="14" viewBox="0 0 12 14"><path d="M0.5 0.5 H8 L11.5 4 V13.5 H0.5Z" fill="#f4f8fc" stroke="#8aa0c8" stroke-width="0.9"/><path d="M2.5 4 H8.5 M2.5 6.2 H9 M2.5 8.4 H9 M2.5 10.6 H9" stroke="#5a7ab8" stroke-width="0.9"/></svg>
<svg style="left:1075px;top:104px" width="11" height="11" viewBox="0 0 11 11"><path d="M0.5 0.5 L10.5 10.5 M10.5 0.5 L0.5 10.5" stroke="#333" stroke-width="1.1"/></svg>
<svg style="left:2px;top:548px" width="16" height="14" viewBox="0 0 16 14"><g stroke="#333" stroke-width="1"><path d="M4 3 L1.5 1 M3 7 L0.5 7 M4 11 L1.5 13 M11 3 L13.5 1 M12 7 L14.5 7 M11 11 L13.5 13"/></g><ellipse cx="7.5" cy="7.5" rx="4.2" ry="5.2" transform="rotate(35 7.5 7.5)" fill="#f0902a" stroke="#a04a10" stroke-width="0.8"/></svg>
<svg style="left:150px;top:549px" width="10" height="10" viewBox="0 0 10 10"><path d="M0.5 0.5 L9.5 9.5 M9.5 0.5 L0.5 9.5" stroke="#333" stroke-width="1.1"/></svg>
<svg style="left:172px;top:546px" width="14" height="14" viewBox="0 0 14 14"><path d="M7 0 V13 M0.5 6.5 H13.5" stroke="#222" stroke-width="2"/></svg>
<div class="a" style="left:481px;top:543px;width:10px;height:4.5px;background:transparent;border:1.5px solid #111"></div>
<div class="a" style="left:504px;top:543px;width:10px;height:11px;background:transparent;border:1.5px solid #111;border-top-width:2px"></div>
<svg style="left:199px;top:573px" width="15" height="15" viewBox="0 0 15 15"><path d="M1 0.5 L3 2.5" stroke="#222"/><path d="M2.5 3 L6 2 L8.5 4.5 L5 8Z" fill="#999" stroke="#222" stroke-width="0.9"/><path d="M9 8 L12.5 11.5 L11 14.5 L7 14.5 Z" fill="#999" stroke="#222" stroke-width="0.9"/><path d="M5.5 9.5 L8 7" stroke="#e00" stroke-width="1.4" stroke-dasharray="1.3 1"/><circle cx="11.5" cy="2.5" r="1.8" fill="#e82020"/></svg>
<svg style="left:225px;top:574px" width="12" height="14" viewBox="0 0 12 14"><path d="M4 0.5 L9 1 L6 6 L10 6 L5 13.5 L6 8 L2 8Z" fill="#f0f0f0" stroke="#b8b8b8" stroke-width="0.9"/></svg>
<svg style="left:249px;top:578px" width="11" height="6" viewBox="0 0 11 6"><path d="M0 0 H11 L5.5 6Z" fill="#6a6a6a"/></svg>
<svg style="left:273px;top:576px" width="12" height="11" viewBox="0 0 12 11"><path d="M0.5 0.5 L11.5 5.5 L0.5 10.5Z" fill="#3cae4c" stroke="#2a8a3a" stroke-width="0.8"/></svg>
<svg style="left:296px;top:576px" width="11" height="11" viewBox="0 0 11 11"><rect x="0.5" y="0.5" width="3.8" height="10" rx="0.8" fill="#f8f2e0" stroke="#b0986a"/><rect x="6.5" y="0.5" width="3.8" height="10" rx="0.8" fill="#f8f2e0" stroke="#b0986a"/></svg>
<svg style="left:317px;top:576px" width="16" height="12" viewBox="0 0 16 12"><path d="M0.5 1.5 H6 Q9 1.5 9 4.5 V7" fill="none" stroke="#d8a030" stroke-width="1.8"/><path d="M6 6.5 L9 10 L12 6.5" fill="#ffe9a8" stroke="#d8a030" stroke-width="1.2"/><path d="M0 11 H3 M11 11 H15" stroke="#2a5a9a" stroke-width="1.6"/></svg>
<svg style="left:340px;top:576px" width="16" height="12" viewBox="0 0 16 12"><path d="M1.5 7 Q1.5 1 7.5 1 Q13 1 13 6" fill="none" stroke="#d8a030" stroke-width="1.8"/><path d="M10 5.5 L13 9 L16 5.5" fill="#ffe9a8" stroke="#d8a030" stroke-width="1.2"/><path d="M4 11 H7" stroke="#2a5a9a" stroke-width="1.6"/></svg>
<svg style="left:363px;top:576px" width="16" height="12" viewBox="0 0 16 12"><path d="M6.5 11 V6 Q6.5 3 10 3" fill="none" stroke="#d8a030" stroke-width="1.8"/><path d="M9.5 0 L13 3 L9.5 6Z" fill="#ffe9a8" stroke="#d8a030" stroke-width="1.1"/><path d="M0 11 H3 M11 11 H15" stroke="#2a5a9a" stroke-width="1.6"/></svg>
<svg style="left:386px;top:573px" width="14" height="15" viewBox="0 0 14 15"><path d="M0.5 3 H11 M0.5 6 H11" stroke="#d8a030" stroke-width="1.3"/><path d="M10 0.5 L13.5 4.5 L10 8.5Z" fill="#ffe9a8" stroke="#d8a030"/><text x="1" y="14.5" font-size="7.5" font-weight="bold" fill="#4a5a88" font-family="Liberation Sans">s</text><rect x="9.5" y="10" width="1.5" height="5" fill="#aaa"/></svg>
<svg style="left:410px;top:575px" width="15" height="12" viewBox="0 0 15 12"><path d="M0.5 4 H5 V0.8 L10.5 6 L5 11.2 V8 H0.5Z" fill="#ffe08a" stroke="#d09a20" stroke-width="1.1" stroke-linejoin="round"/><rect x="12.5" y="0" width="2" height="12" fill="#4a78c0"/></svg>
<svg style="left:435px;top:578px" width="11" height="6" viewBox="0 0 11 6"><path d="M0 0 H11 L5.5 6Z" fill="#000"/></svg>
<svg style="left:458px;top:573px" width="15" height="15" viewBox="0 0 15 15"><path d="M2.5 6 Q2.5 1 8 1 Q11.5 1 12.5 3.5 M12.5 9.5 Q12.5 14.3 7 14.3 Q3.5 14.3 2.5 11.5" fill="none" stroke="#3a7a4a" stroke-width="1"/><path d="M14.5 1.5 L14.5 6.5 L9.5 6.5Z" fill="#50d050" stroke="#2a8a3a" stroke-width="0.6"/><path d="M0.5 13.5 L0.5 8.5 L5.5 8.5Z" fill="#50d050" stroke="#2a8a3a" stroke-width="0.6"/></svg>
<svg style="left:483px;top:578px" width="11" height="6" viewBox="0 0 11 6"><path d="M0 0 H11 L5.5 6Z" fill="#000"/></svg>
<div class="a" style="left:505px;top:576.5px;width:14px;height:2px;background:#333;"></div>
<div class="a" style="left:505px;top:580.7px;width:14px;height:2px;background:#333;"></div>
<div class="a" style="left:505px;top:584.9px;width:14px;height:2px;background:#333;"></div>
<svg style="left:6px;top:603px" width="10" height="6" viewBox="0 0 10 6"><path d="M0.5 0.5 L5 5 L9.5 0.5" fill="none" stroke="#555" stroke-width="1.2"/></svg>
<svg style="left:26px;top:598px" width="16" height="16" viewBox="0 0 16 16"><path d="M0.5 0.5 L3 3" stroke="#222" stroke-width="1.1"/><path d="M2 3.5 L7 2.5 L12 7.5 L6 12Z" fill="#a8a8a8" stroke="#222" stroke-width="1.1"/><path d="M8 11 L10.5 14 M10.5 9 L13 12 M12.5 7 L15 9.5" stroke="#222" stroke-width="1.2"/></svg>
<svg style="left:50px;top:626px" width="17" height="17" viewBox="0 0 17 17"><g stroke="#111" stroke-width="1"><path d="M4 0 V3 M7 0 V3 M10 0 V3 M13 0 V3 M4 13 V16 M7 13 V16 M10 13 V16 M13 13 V16 M0 4 H3 M0 7 H3 M0 10 H3 M0 13 H3 M13 4 H16 M13 7 H16"/></g><rect x="2.5" y="2.5" width="11" height="11" fill="#6464f8" stroke="#222" stroke-width="0.8"/><rect x="10" y="10" width="6.5" height="6.5" fill="#f08080" stroke="#d02020" stroke-width="1.1"/></svg>
<svg style="left:536px;top:585px" width="13" height="13" viewBox="0 0 13 13"><rect x="0.8" y="0.8" width="11.4" height="8.5" rx="1.2" fill="#fff" stroke="#4a78c0" stroke-width="1.6"/><path d="M3 3.5 H7 M3 6 H9" stroke="#4a78c0" stroke-width="0.9"/><rect x="5" y="10" width="3" height="1.5" fill="#4a78c0"/><rect x="2.5" y="11.5" width="8" height="1.5" fill="#4a78c0"/></svg>
<svg style="left:629px;top:585px" width="14" height="14" viewBox="0 0 14 14"><rect x="0.5" y="0.5" width="13" height="13" fill="#2a8ae0"/><rect x="1.5" y="3" width="11" height="9.5" fill="#1a1a1a"/><path d="M3 6 L5 7.5 L3 9" fill="none" stroke="#30c030" stroke-width="0.9"/><rect x="6" y="6.5" width="4" height="3" fill="#30c030"/></svg>
<svg style="left:1175px;top:585px" width="14" height="14" viewBox="0 0 14 14"><rect x="0.5" y="0.5" width="13" height="13" fill="#2a8ae0"/><rect x="1.5" y="3" width="11" height="9.5" fill="#1a1a1a"/><path d="M3 6 L5 7.5 L3 9" fill="none" stroke="#30c030" stroke-width="0.9"/><rect x="6" y="6.5" width="4" height="3" fill="#30c030"/></svg>
<svg style="left:750px;top:587px" width="17" height="10" viewBox="0 0 17 10"><text x="0" y="8.5" font-size="9.5" fill="#2a4a8a" font-family="Liberation Sans" font-weight="bold">(x)=</text></svg>
<svg style="left:851px;top:587px" width="13" height="11" viewBox="0 0 13 11"><rect x="0" y="0" width="13" height="1.5" fill="#d89a30"/><rect x="0" y="9.5" width="13" height="1.5" fill="#d89a30"/><text x="0.5" y="8" font-size="6.5" font-weight="bold" fill="#222" font-family="Liberation Mono">010</text></svg>
<svg style="left:951px;top:585px" width="14" height="14" viewBox="0 0 14 14"><path d="M0.5 1 V2 M0.5 4 V5 M0.5 7 V8 M0.5 10 V11 M2.5 1 V2 M2.5 4 V5 M2.5 7 V8 M2.5 10 V11" stroke="#888" stroke-width="1"/><rect x="5" y="0.5" width="8.5" height="13" fill="#fafafa" stroke="#444" stroke-width="0.9"/><path d="M5 4.5 H13.5 M5 8.5 H13.5" stroke="#444" stroke-width="0.9"/></svg>
<svg style="left:1046px;top:586px" width="14" height="12" viewBox="0 0 14 12"><text x="0" y="5.5" font-size="6.5" font-weight="bold" fill="#333" font-family="Liberation Mono">101</text><text x="0" y="11.5" font-size="6.5" font-weight="bold" fill="#333" font-family="Liberation Mono">010</text></svg>
<svg style="left:1320px;top:589px" width="10" height="9" viewBox="0 0 10 9"><path d="M0.5 0.5 L9.5 8.5 M9.5 0.5 L0.5 8.5" stroke="#333" stroke-width="1.1"/></svg>
<svg style="left:1342px;top:585px" width="14" height="14" viewBox="0 0 14 14"><path d="M7 0 V13 M0.5 6.5 H13.5" stroke="#222" stroke-width="2"/></svg>
<div class="a" style="left:522.2px;top:417.2px;width:747.8px;height:105.8px;background:transparent;border:2.3px solid #ff0000"></div>
<div class="a" style="left:5.3px;top:587.2px;width:336.5px;height:73.5px;background:transparent;border:2.3px solid #ff0000"></div>
<div class="a" style="left:530px;top:739.3px;width:207px;height:34.8px;background:transparent;border:2.3px solid #ff0000"></div>
</body></html>
